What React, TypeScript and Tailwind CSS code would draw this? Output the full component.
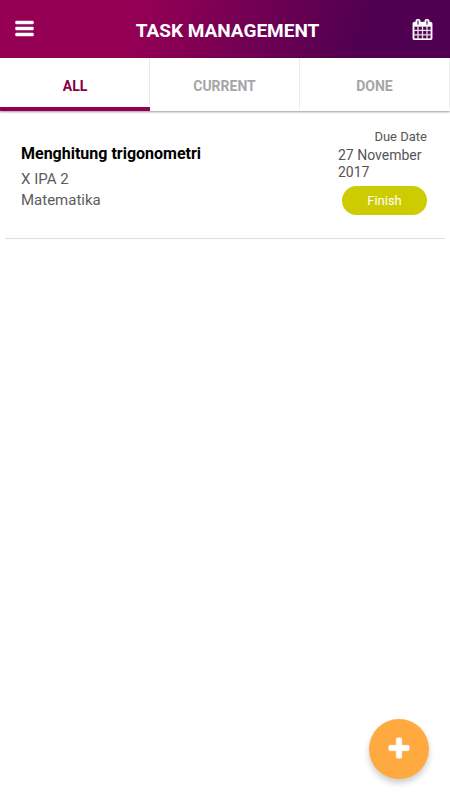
import React from "react";

type IconProps = { d: string; className: string };

function Icon({ d, className }: IconProps) {
  return (
    <svg viewBox="0 0 1792 1792" fill="currentColor" stroke="currentColor" className={className} aria-hidden="true">
      <path d={d} />
    </svg>
  );
}

const BARS =
  "M1664 1344v128q0 26-19 45t-45 19h-1408q-26 0-45-19t-19-45v-128q0-26 19-45t45-19h1408q26 0 45 19t19 45zm0-512v128q0 26-19 45t-45 19h-1408q-26 0-45-19t-19-45v-128q0-26 19-45t45-19h1408q26 0 45 19t19 45zm0-512v128q0 26-19 45t-45 19h-1408q-26 0-45-19t-19-45v-128q0-26 19-45t45-19h1408q26 0 45 19t19 45z";
const CALENDAR =
  "M192 1664h288v-288h-288v288zm352 0h320v-288h-320v288zm-352-352h288v-320h-288v320zm352 0h320v-320h-320v320zm-352-384h288v-288h-288v288zm736 736h320v-288h-320v288zm-384-736h320v-288h-320v288zm768 736h288v-288h-288v288zm-384-352h320v-320h-320v320zm-352-864v-288q0-13-9.5-22.5t-22.5-9.5h-64q-13 0-22.5 9.5t-9.5 22.5v288q0 13 9.5 22.5t22.5 9.5h64q13 0 22.5-9.5t9.5-22.5zm736 864h288v-320h-288v320zm-384-384h320v-288h-320v288zm384 0h288v-288h-288v288zm32-480v-288q0-13-9.5-22.5t-22.5-9.5h-64q-13 0-22.5 9.5t-9.5 22.5v288q0 13 9.5 22.5t22.5 9.5h64q13 0 22.5-9.5t9.5-22.5zm384-64v1280q0 52-38 90t-90 38h-1408q-52 0-90-38t-38-90v-1280q0-52 38-90t90-38h128v-96q0-66 47-113t113-47h64q66 0 113 47t47 113v96h384v-96q0-66 47-113t113-47h64q66 0 113 47t47 113v96h128q52 0 90 38t38 90z";
const PLUS =
  "M1600 736v192q0 40-28 68t-68 28h-416v416q0 40-28 68t-68 28h-192q-40 0-68-28t-28-68v-416h-416q-40 0-68-28t-28-68v-192q0-40 28-68t68-28h416v-416q0-40 28-68t68-28h192q40 0 68 28t28 68v416h416q40 0 68 28t28 68z";

const TABS = ["ALL", "CURRENT", "DONE"];

const TASKS = [
  { title: "Menghitung trigonometri", group: "X IPA 2", subject: "Matematika", due: "27 November 2017" },
];

export default function App() {
  const [active, setActive] = React.useState("ALL");
  return (
    <div className="flex min-h-screen flex-col bg-white font-['Roboto',sans-serif]">
      <header className="flex h-[58px] items-center justify-between bg-[linear-gradient(105deg,#950055_30%,#500050_80%)] pr-[17px] pl-[14px] text-white">
        <button type="button" aria-label="Menu" className="pb-px">
          <Icon d={BARS} className="size-[21px] stroke-[40]" />
        </button>
        <h1 className="pt-1 pl-2 text-[19px] leading-6 font-bold">TASK MANAGEMENT</h1>
        <button type="button" aria-label="Calendar" className="pt-px">
          <Icon d={CALENDAR} className="size-[21px] stroke-[30]" />
        </button>
      </header>

      <nav className="grid h-[53px] grid-cols-3 bg-white shadow-[0_1px_2px_rgba(0,0,0,0.4)]">
        {TABS.map((tab) => (
          <button
            key={tab}
            type="button"
            aria-pressed={active === tab}
            onClick={() => setActive(tab)}
            className={
              "border-b-4 pt-1.5 text-sm font-bold " +
              (active === tab
                ? "border-[#950055] text-[#880044] shadow-[inset_-1px_0_0_#ebebeb]"
                : "border-r border-r-[#ebebeb] border-b-transparent text-[#a6a6a6]")
            }
          >
            {tab}
          </button>
        ))}
      </nav>

      <main className="flex-1 px-[5px] pt-4">
        <ul>
          {TASKS.map((task) => (
            <li key={task.title} className="flex justify-between border-b border-[#e0e0e0] pr-[18px] pb-[23px] pl-4">
              <div className="pt-4 text-[15px] leading-[21px] text-[#5c5c5c]">
                <h2 className="pb-[5px] text-base leading-[21px] font-bold text-black">{task.title}</h2>
                <p>{task.group}</p>
                <p>{task.subject}</p>
              </div>
              <div className="flex w-[89px] flex-col items-end text-[#555555]">
                <p className="text-[13px] leading-5">Due Date</p>
                <p className="w-full text-sm leading-[17px]">{task.due}</p>
                <button
                  type="button"
                  className="mt-[5px] h-[29px] w-[85px] rounded-full bg-[#cccc00] text-[13px] text-white"
                >
                  Finish
                </button>
              </div>
            </li>
          ))}
        </ul>
      </main>

      <button
        type="button"
        aria-label="Add task"
        className="fixed right-[21px] bottom-[21px] flex size-[60px] items-center justify-center rounded-full bg-[#ffaa40] text-white shadow-[0_4px_6px_rgba(0,0,0,0.2)]"
      >
        <Icon d={PLUS} className="size-[26px] stroke-[30]" />
      </button>
    </div>
  );
}
